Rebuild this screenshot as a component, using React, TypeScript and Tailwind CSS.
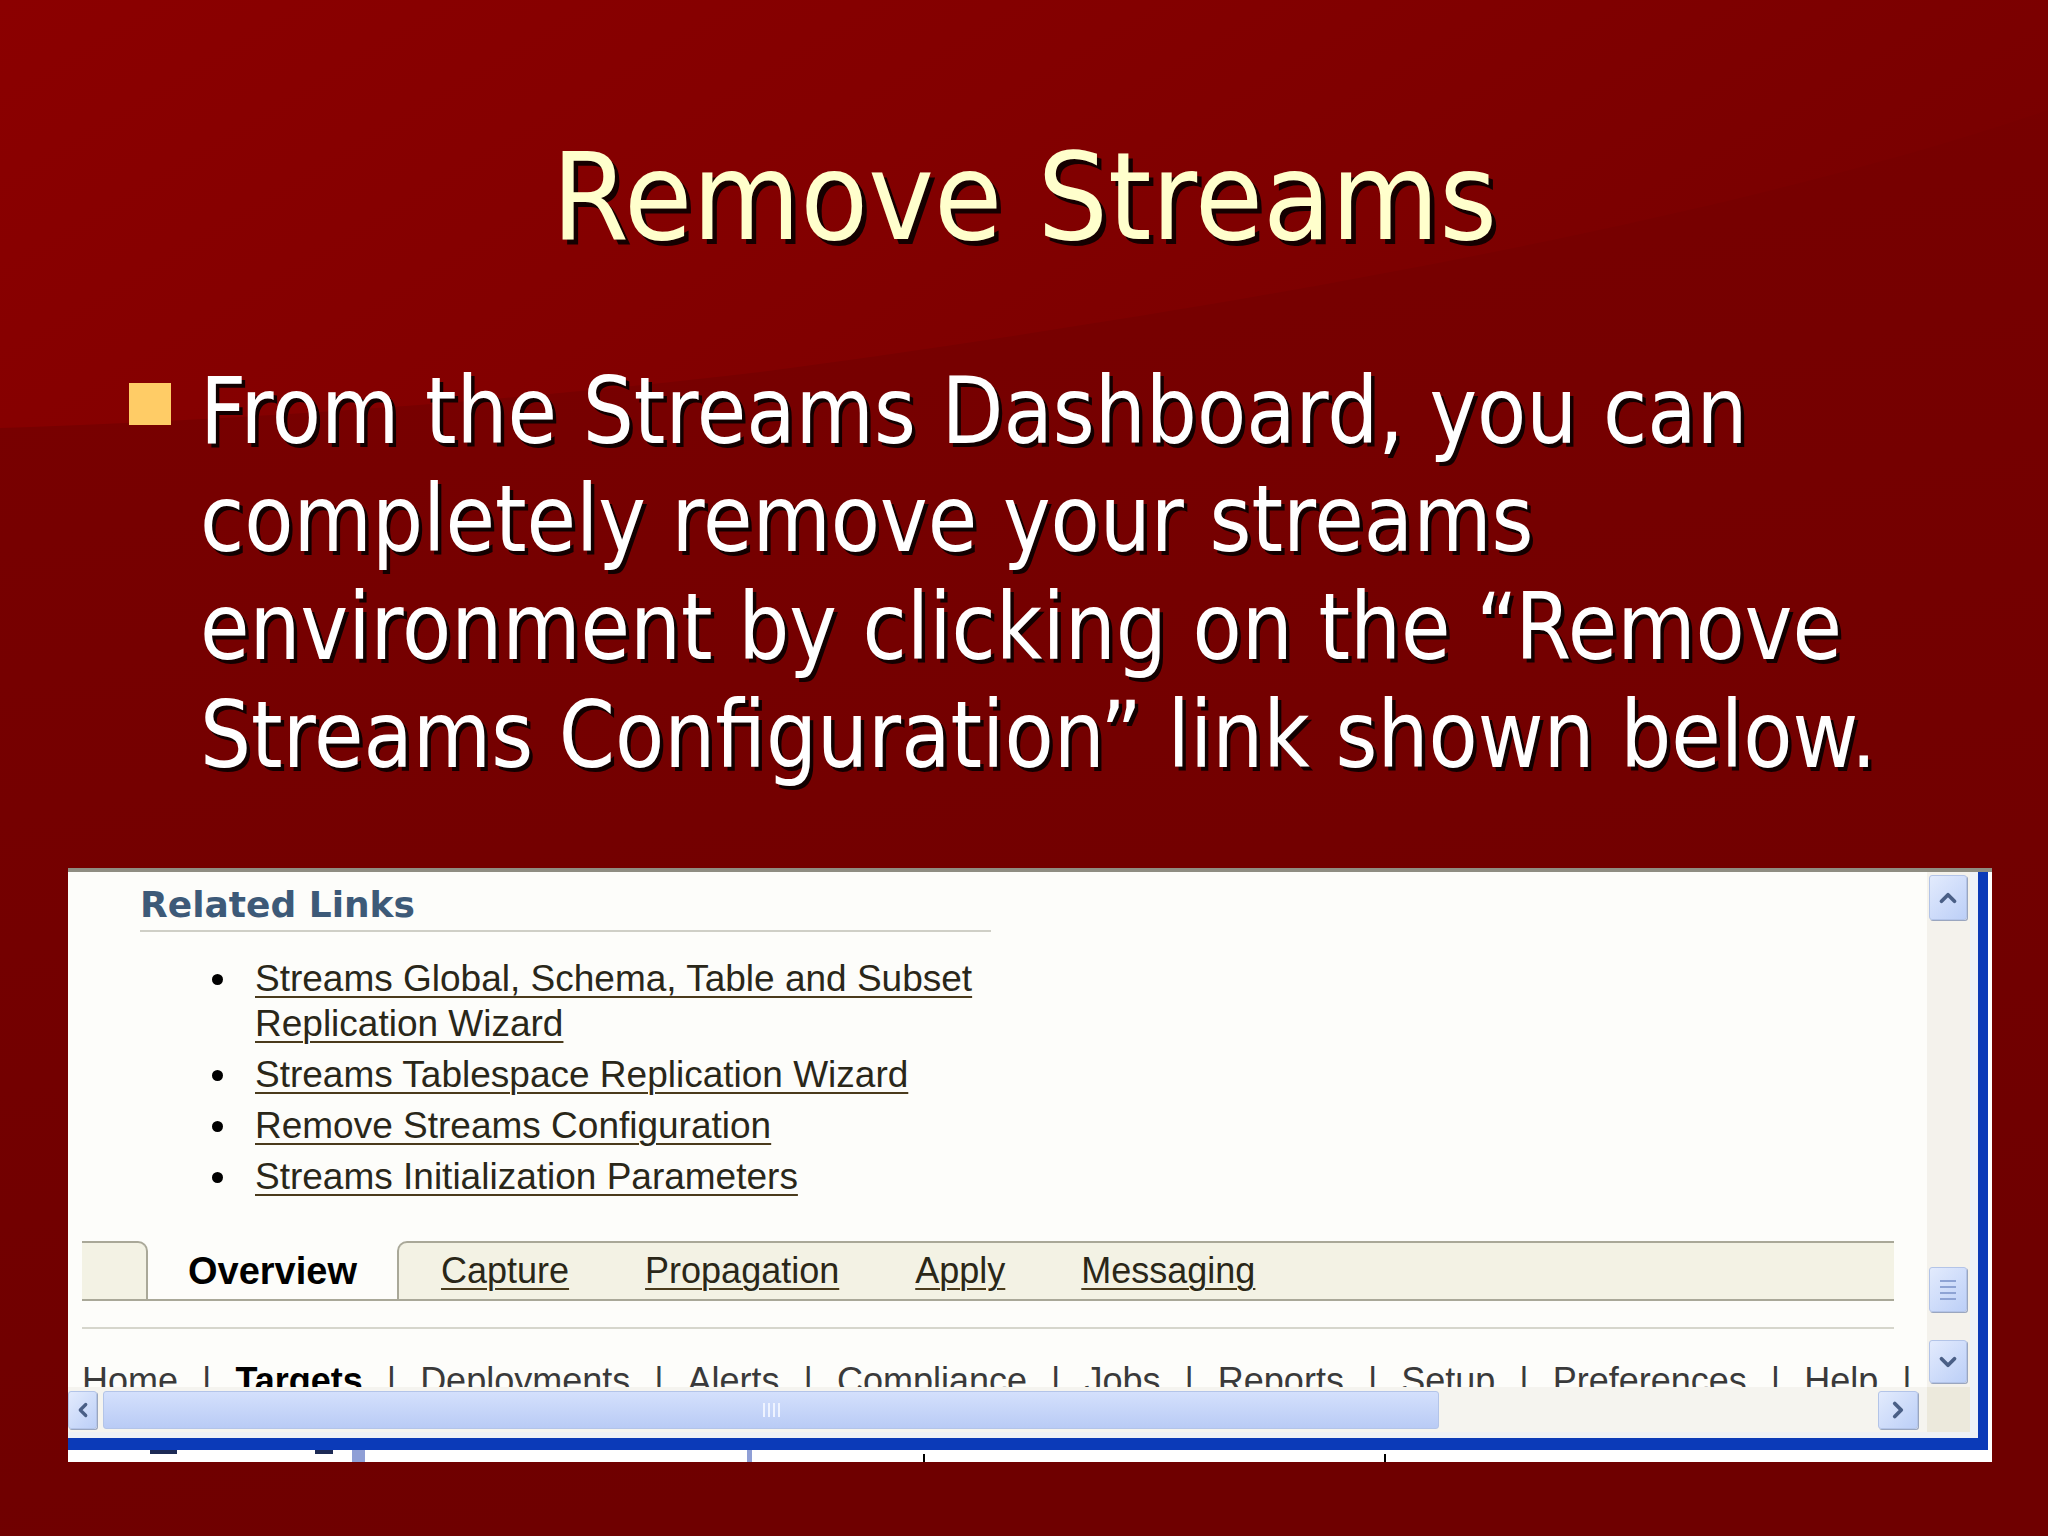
import { ChevronDown, ChevronLeft, ChevronRight, ChevronUp } from "lucide-react";

/**
 * Slide: "Remove Streams"
 * Dark red slide with a title, one bullet and a screenshot of the
 * Streams dashboard (related links, tab bar, XP scroll bars).
 */

const LINKS: string[][] = [
  ["Streams Global, Schema, Table and Subset", "Replication Wizard"],
  ["Streams Tablespace Replication Wizard"],
  ["Remove Streams Configuration"],
  ["Streams Initialization Parameters"],
];

const TABS = ["Capture", "Propagation", "Apply", "Messaging"];

const NAV = [
  "Home",
  "Targets",
  "Deployments",
  "Alerts",
  "Compliance",
  "Jobs",
  "Reports",
  "Setup",
  "Preferences",
  "Help",
];

export default function App() {
  return (
    <div className="relative w-[2048px] h-[1536px] overflow-hidden bg-[#730000]">
      <Backdrop />

      <div className="relative flex flex-col">
        {/* 标题 */}
        <div className="pt-[136px] text-center">
          <h1 className="inline-block origin-center scale-x-[0.91] whitespace-nowrap font-['DejaVu_Sans',Verdana,sans-serif] text-[122px] leading-none text-[#ffffcc] [text-shadow:5px_5px_0_#140000]">
            Remove Streams
          </h1>
        </div>

        {/* 正文 */}
        <div className="mt-[100px] flex pl-[129px]">
          <span className="mt-[25px] h-[42px] w-[42px] shrink-0 bg-[#ffcc66]" />
          <p className="ml-[29px] origin-left scale-x-[0.875] whitespace-nowrap font-['DejaVu_Sans',Verdana,sans-serif] text-[92px] leading-[108px] text-white [text-shadow:4px_4px_0_#120000]">
            From the Streams Dashboard, you can
            <br />
            completely remove your streams
            <br />
            environment by clicking on the “Remove
            <br />
            Streams Configuration” link shown below.
          </p>
        </div>

        <Screenshot />
      </div>
    </div>
  );
}

function Backdrop() {
  return (
    <svg
      className="absolute inset-0"
      width="2048"
      height="1536"
      viewBox="0 0 2048 1536"
    >
      <defs>
        <linearGradient id="base" x1="0" y1="0" x2="0.25" y2="1">
          <stop offset="0" stopColor="#7b0000" />
          <stop offset="1" stopColor="#6f0000" />
        </linearGradient>
        <linearGradient id="glow" x1="0" y1="0" x2="1" y2="0.35">
          <stop offset="0" stopColor="#8b0000" />
          <stop offset="0.5" stopColor="#830000" />
          <stop offset="1" stopColor="#790000" />
        </linearGradient>
      </defs>
      <rect width="2048" height="1536" fill="url(#base)" />
      <path
        d="M0 0 H2048 V110 C1700 230 1150 320 760 372 C480 405 220 420 0 428 Z"
        fill="url(#glow)"
      />
    </svg>
  );
}

function Screenshot() {
  return (
    <div className="mt-[78px] ml-[68px] flex h-[594px] w-[1924px] flex-col border-t-4 border-[#8f8d82] bg-[#fdfdfa]">
      <div className="flex h-[578px]">
        <div className="flex flex-1 flex-col">
          <div className="flex h-[515px]">
            <Content />
            <VScroll />
            <div className="w-[8px] bg-[#eef2f8]" />
          </div>
          <HScroll />
          <div className="h-[6px] bg-[#eef1f6]" />
          <div className="h-[12px] bg-[#0b3ab8]" />
        </div>
        <div className="w-[10px] bg-[#0b3ab8]" />
        <div className="w-[4px] bg-white" />
      </div>

      {/* 窗口下方露出的一条 */}
      <div className="flex h-[12px] bg-white">
        <div className="w-[82px]" />
        <div className="h-[4px] w-[27px] bg-[#1c2a55]" />
        <div className="w-[138px]" />
        <div className="h-[4px] w-[18px] bg-[#1c2a55]" />
        <div className="w-[19px]" />
        <div className="h-[12px] w-[13px] bg-[#8f9fd6]" />
        <div className="w-[382px]" />
        <div className="h-[12px] w-[5px] bg-[#8f9fd6]" />
        <div className="w-[171px]" />
        <div className="mt-[4px] h-[8px] w-[2px] bg-black" />
        <div className="w-[459px]" />
        <div className="mt-[4px] h-[8px] w-[2px] bg-black" />
      </div>
    </div>
  );
}

function Content() {
  return (
    <div className="flex-1 overflow-hidden pl-[14px] pt-[13px]">
      {/* Related Links 标题 */}
      <div className="ml-[58px] font-['DejaVu_Sans',Verdana,sans-serif] text-[36px] font-bold leading-[40px] text-[#3d5a78]">
        Related Links
      </div>
      <div className="mt-[5px] ml-[58px] h-[2px] w-[851px] bg-[#cfcfc6]" />

      {/* 链接列表 */}
      <ul className="mt-[24px] flex flex-col gap-[6px] pl-[130px] font-['Liberation_Sans',Arial,sans-serif] text-[37px] leading-[45px] text-[#2a2719]">
        {LINKS.map((lines) => (
          <li key={lines[0]} className="flex">
            <span className="w-[43px] shrink-0">
              <span className="mt-[18px] block h-[11px] w-[11px] rounded-full bg-black" />
            </span>
            <span className="underline decoration-[#4a3b1c] decoration-2 underline-offset-[5px]">
              {lines.map((l, i) => (
                <span key={l}>
                  {i > 0 ? <br /> : null}
                  {l}
                </span>
              ))}
            </span>
          </li>
        ))}
      </ul>

      {/* 标签栏 */}
      <div className="mt-[42px] flex h-[60px] w-[1812px] border-b-2 border-[#a9a898] font-['Liberation_Sans',Arial,sans-serif] text-[36px] leading-[56px]">
        <div className="w-[66px] rounded-tr-[10px] border-t-2 border-r-2 border-[#a9a898] bg-[#f3f2e4]" />
        <div className="flex w-[249px] justify-center bg-[#fdfdfa] pt-[2px] text-[38px] font-bold text-black">
          Overview
        </div>
        <div className="flex flex-1 gap-[76px] rounded-tl-[10px] border-t-2 border-l-2 border-[#a9a898] bg-[#f3f2e4] pl-[42px]">
          {TABS.map((t) => (
            <span
              key={t}
              className="text-[#2a2718] underline decoration-[#4a3b1c] decoration-2 underline-offset-[5px]"
            >
              {t}
            </span>
          ))}
        </div>
      </div>

      <div className="mt-[26px] h-[2px] w-[1812px] bg-[#d6d6cc]" />

      {/* 全局导航（被滚动条遮住下半） */}
      <div className="mt-[29px] flex gap-[24px] whitespace-nowrap font-['Liberation_Sans',Arial,sans-serif] text-[36px] leading-[45px] text-[#3a3a3a]">
        {NAV.map((n) => (
          <span key={n} className="flex gap-[24px]">
            <span className={n === "Targets" ? "font-bold text-black" : ""}>{n}</span>
            <span>|</span>
          </span>
        ))}
      </div>
    </div>
  );
}

function ScrollButton({ children, className }: { children: React.ReactNode; className: string }) {
  return (
    <div
      className={
        "flex items-center justify-center rounded-[3px] border border-[#b3c4e8] bg-[linear-gradient(135deg,#e3ebfd,#bccff7)] text-[#4a5f86] shadow-[1px_1px_0_#9aa6bf] " +
        className
      }
    >
      {children}
    </div>
  );
}

function VScroll() {
  return (
    <div className="flex w-[43px] flex-col bg-[#f4f2ec] pl-[2px] pt-[3px]">
      <ScrollButton className="h-[45px] w-[38px]">
        <ChevronUp size={26} strokeWidth={3.5} />
      </ScrollButton>
      <div className="h-[347px]" />
      <ScrollButton className="h-[45px] w-[38px]">
        <div className="flex flex-col gap-[4px]">
          <span className="block h-[2px] w-[16px] bg-[#8ea3d4]" />
          <span className="block h-[2px] w-[16px] bg-[#8ea3d4]" />
          <span className="block h-[2px] w-[16px] bg-[#8ea3d4]" />
          <span className="block h-[2px] w-[16px] bg-[#8ea3d4]" />
        </div>
      </ScrollButton>
      <div className="h-[28px]" />
      <ScrollButton className="h-[43px] w-[38px]">
        <ChevronDown size={26} strokeWidth={3.5} />
      </ScrollButton>
    </div>
  );
}

function HScroll() {
  return (
    <div className="flex h-[45px]">
      <div className="flex w-[1859px] items-center bg-[#f5f4ef]">
        <ScrollButton className="h-[38px] w-[29px]">
          <ChevronLeft size={22} strokeWidth={3.5} />
        </ScrollButton>
        <div className="ml-[6px] flex h-[38px] w-[1336px] items-center justify-center rounded-[3px] border border-[#b3c4e8] bg-[linear-gradient(#d4e0fc,#b9cbf5)]">
          <div className="flex gap-[3px]">
            <span className="block h-[14px] w-[2px] bg-[#eef3ff]" />
            <span className="block h-[14px] w-[2px] bg-[#eef3ff]" />
            <span className="block h-[14px] w-[2px] bg-[#eef3ff]" />
            <span className="block h-[14px] w-[2px] bg-[#eef3ff]" />
          </div>
        </div>
        <div className="flex-1" />
        <ScrollButton className="mr-[9px] h-[38px] w-[40px]">
          <ChevronRight size={26} strokeWidth={3.5} />
        </ScrollButton>
      </div>
      <div className="w-[43px] bg-[#ece9dc]" />
      <div className="w-[8px] bg-[#eef2f8]" />
    </div>
  );
}
